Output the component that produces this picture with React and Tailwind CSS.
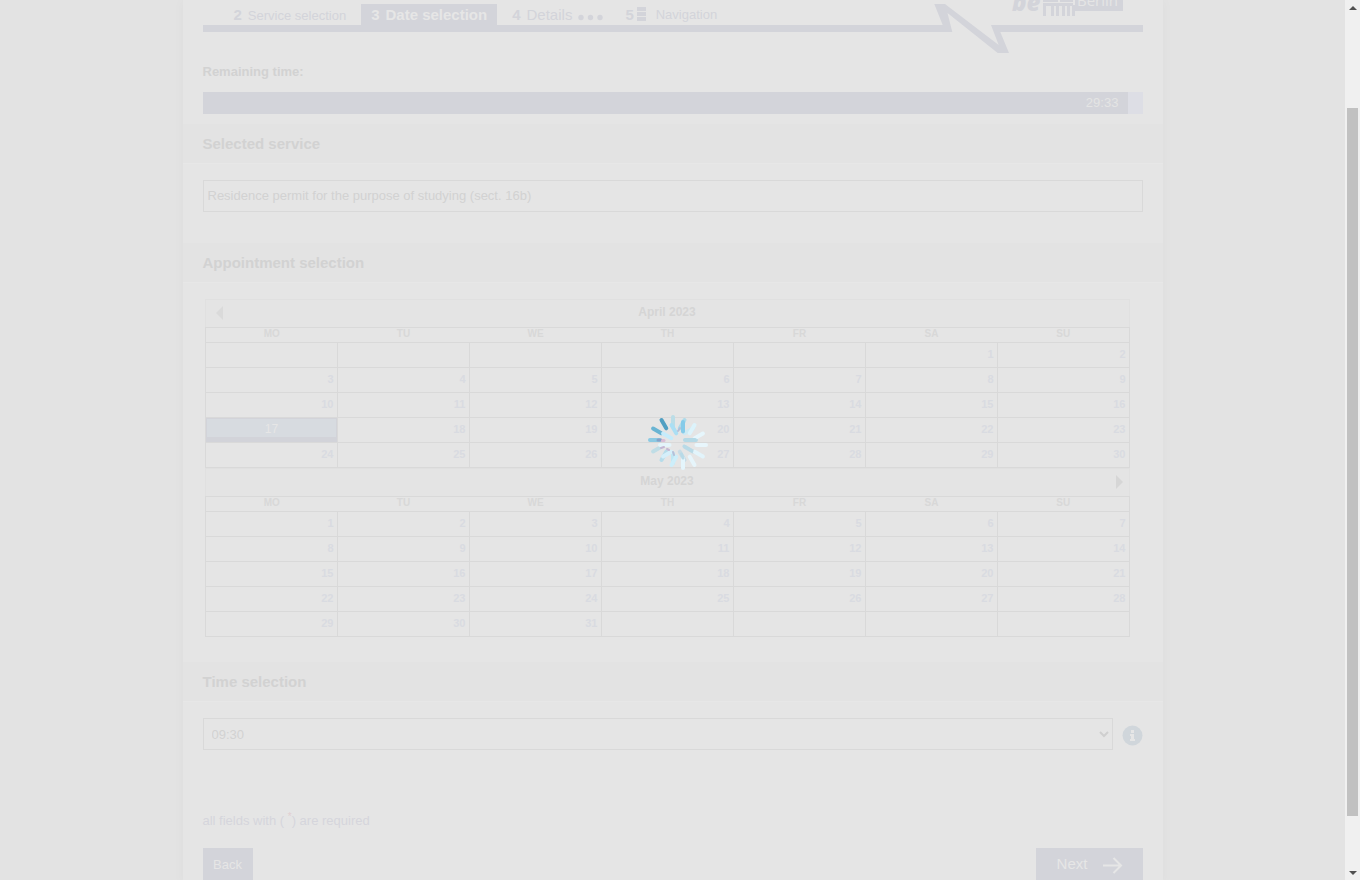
import React from "react";

const WEEKDAYS = ["MO", "TU", "WE", "TH", "FR", "SA", "SU"];

function buildWeeks(offset, count) {
  const cells = [];
  for (let i = 0; i < 35; i++) {
    const day = i - offset + 1;
    cells.push(day >= 1 && day <= count ? day : null);
  }
  return [0, 1, 2, 3, 4].map((w) => cells.slice(w * 7, w * 7 + 7));
}

function Logo() {
  return (
    <svg width="240" height="53" viewBox="0 0 240 53" className="block shrink-0 fill-[#d3d4da]" role="img" aria-label="Berlin">
      <path d="M0 25H39.700L31.300 4H42L95.700 45L88 25H240V32H97.300L106 53H94.700L44.500 13L49.300 32H0Z" />
      <text x="109" y="11" fontSize="24" fontWeight="800" fontStyle="italic" fontFamily="'Open Sans', sans-serif">be</text>
      <path d="M140 0H155V2H140ZM157 0H170V2H157Z" />
      <path d="M140 3H170V5H172V16H169V6H167V16H164V6H162V16H159V6H156V16H153V6H151V16H148V6H143V16H140Z" />
      <rect x="172" y="0" width="48" height="11" />
      <text x="174" y="6" fontSize="15" fontWeight="500" fontFamily="'Open Sans', sans-serif" className="fill-[#e5e5e5]">Berlin</text>
    </svg>
  );
}

function SectionTitle({ children }) {
  return (
    <h2 className="flex h-10 items-center border-b border-[#e7e7e7] bg-[#e3e3e3] px-5 pt-0.5 text-[15px] font-bold text-[#d2d2d2]">
      {children}
    </h2>
  );
}

function Month({ name, weeks, selected, prev, next }) {
  return (
    <section>
      <div className="flex h-7 items-center border-x border-t border-[#e0e0e0] bg-[#e4e4e4] pb-0.5 pl-2.5 pr-1.5">
        <div className="flex w-3 shrink-0">
          {prev && (
            <button type="button" aria-label="Previous month">
              <svg width="7" height="14" viewBox="0 0 7 14" className="fill-[#dadada]"><path d="M7 0V14L0 7Z" /></svg>
            </button>
          )}
        </div>
        <h3 className="flex-1 pb-px text-center text-xs font-bold leading-4 text-[#d5d5d5]">{name}</h3>
        <div className="flex w-4 shrink-0 justify-end">
          {next && (
            <button type="button" aria-label="Next month">
              <svg width="7" height="14" viewBox="0 0 7 14" className="fill-[#d6d6d6]"><path d="M0 0V14L7 7Z" /></svg>
            </button>
          )}
        </div>
      </div>
      <table className="w-full table-fixed border-collapse border border-[#d9d9d9]">
        <thead>
          <tr className="h-[15px]">
            {WEEKDAYS.map((d) => (
              <th key={d} className="h-[15px] p-0 pl-px align-top text-[10px] font-bold leading-3 text-[#d8d8d8]">{d}</th>
            ))}
          </tr>
        </thead>
        <tbody>
          {weeks.map((week, w) => (
            <tr key={w} className="h-[25px]">
              {week.map((day, i) =>
                day !== null && day === selected ? (
                  <td key={i} className="h-[25px] border border-[#d9d9d9] p-0 text-center text-xs text-[#e6e6e6]">
                    <a href="#day" className="block h-6 border border-b-[5px] border-[#d2d3d9] bg-[#d7dbe0] pl-px pt-px leading-[18px]">{day}</a>
                  </td>
                ) : (
                  <td key={i} className="h-[25px] border border-[#d9d9d9] p-0 pb-0.5 pr-[3px] text-right text-[11px] font-bold leading-4 text-[#d9dbe1]">{day}</td>
                )
              )}
            </tr>
          ))}
        </tbody>
      </table>
    </section>
  );
}

const RING_BACK = ["#b9dae4", "#bfdae4", "#c7dce6", "#bfe7f4", "#b6dcea", "#bfdde6", "#8ccae3", "#69b4d3", "#519fc2", "#bbdde7", "#aedbea", "#cdeaf4"];
const RING_FRONT = ["#e8f6fc", "#e2f4fb", "#e6f5fb", "#e4f5fc", "#cdeefa", "#d5effa", "#e4f4fa", "#c6ecfb", "#abdff4", "#86cbe9", "#dcf3fb", "#e6f6fc"];

function Ring({ cx, cy, colors }) {
  return (
    <g strokeWidth="4" strokeLinecap="round">
      {colors.map((color, i) => (
        <path key={i} d="M13.500 0H23" stroke={color} transform={`translate(${cx} ${cy}) rotate(${i * 30})`} />
      ))}
    </g>
  );
}

function Spinner() {
  return (
    <div role="status" aria-label="Loading" className="pointer-events-none absolute inset-0 flex items-center justify-center">
      <svg width="62" height="58" viewBox="0 0 62 58" className="mt-1.5 mr-1">
        <Ring cx={26} cy={26} colors={RING_BACK} />
        <Ring cx={36} cy={31} colors={RING_FRONT} />
        <g strokeWidth="3" strokeLinecap="round">
          <path d="M11 26H14" stroke="#86a2c9" />
          <path d="M15.500 26.500H17" stroke="#d9bdd6" />
          <path d="M14 34L17 33M20 35L22 36" stroke="#c4b7d3" strokeWidth="2" />
          <path d="M26 38L27 41M33 14L31 17" stroke="#b5bfd8" strokeWidth="2" />
          <path d="M38 26H48" stroke="#b4d9e6" strokeWidth="4" />
          <path d="M37 32L45 37" stroke="#b8dae7" />
          <path d="M34.500 40L36 44" stroke="#b8dae7" />
        </g>
      </svg>
    </div>
  );
}

export default function App() {
  return (
    <div className="relative flex h-screen overflow-hidden bg-[#e3e3e3] font-['Liberation_Sans',Arial,sans-serif] text-[13px] text-[#d2d2d2]">
      <div className="min-w-0 flex-1 overflow-hidden">
        <main className="mx-auto min-h-full max-w-[980px] bg-[#e5e5e5] shadow-[0_0_12px_rgba(0,0,0,0.03)]">
          <header className="flex items-start px-5 text-[#d3d4da]">
            <nav className="flex h-8 min-w-0 flex-1 whitespace-nowrap border-b-[7px] border-[#d3d4da] pl-[21px] pt-1 leading-[21px]">
              <a href="#service" className="flex gap-1.5 px-2.5 text-[13px]">
                <b className="text-[15px]">2</b>
                <span className="pt-px">Service selection</span>
              </a>
              <a href="#date" className="ml-[5px] flex gap-1.5 bg-[#d3d4da] px-2.5 text-[15px] font-bold text-[#e6e6e6]">
                <b>3</b>
                <span>Date selection</span>
              </a>
              <a href="#details" className="ml-[5px] flex gap-1.5 pl-2.5 text-[15px]">
                <b>4</b>
                <span>Details</span>
                <svg width="25" height="21" viewBox="0 0 25 21" className="fill-[#d3d4da]">
                  <circle cx="3" cy="13.500" r="2.700" /><circle cx="12.500" cy="13.500" r="2.700" /><circle cx="22" cy="13.500" r="2.700" />
                </svg>
              </a>
              <a href="#navigation" className="ml-3 flex px-2.5 text-[13px]">
                <b className="text-[15px]">5</b>
                <svg width="9" height="21" viewBox="0 0 9 21" className="ml-[3px] mr-2.5 fill-[#d3d4da]">
                  <path d="M0 3H9V7H0ZM0 8H9V12H0ZM0 13H9V17H0Z" />
                </svg>
                <span>Navigation</span>
              </a>
            </nav>
            <Logo />
          </header>

          <div className="px-5 pb-2.5 pt-2.5">
            <p className="font-bold leading-[18px]">Remaining time:</p>
            <div className="mt-[11px] bg-[#dddee5]">
              <div className="h-[22px] w-[98.5%] bg-[#d3d4da] pr-2.5 text-right leading-[22px] text-[#e4e4e4]">29:33</div>
            </div>
          </div>

          <SectionTitle>Selected service</SectionTitle>
          <div className="px-5 pb-[31px] pt-4">
            <input
              aria-label="Selected service"
              readOnly
              value="Residence permit for the purpose of studying (sect. 16b)"
              className="block h-8 w-full border border-[#d9d9d9] bg-transparent px-1 pb-0.5 text-[13px] text-[#d2d2d2] outline-none"
            />
          </div>

          <SectionTitle>Appointment selection</SectionTitle>
          <div className="pb-[25px] pl-[22px] pr-[33px] pt-4">
            <Month name="April 2023" weeks={buildWeeks(5, 30)} selected={17} prev />
            <Month name="May 2023" weeks={buildWeeks(0, 31)} next />
          </div>

          <SectionTitle>Time selection</SectionTitle>
          <div className="px-5 pt-4">
            <div className="flex items-center gap-[9px]">
              <div className="relative flex-1">
                <select aria-label="Time selection" className="block h-8 w-full appearance-none border border-[#d9d9d9] bg-transparent px-2 pt-0.5 text-[13px] text-[#d2d2d2]">
                  <option>09:30</option>
                </select>
                <svg width="10" height="7" viewBox="0 0 10 7" className="pointer-events-none absolute right-1 top-[13px] fill-none stroke-[#cfcfcf]" strokeWidth="2">
                  <path d="M1 1L5 5L9 1" />
                </svg>
              </div>
              <button type="button" aria-label="Information" className="pt-0.5">
                <svg width="21" height="21" viewBox="0 0 21 21">
                  <circle cx="10.500" cy="10.500" r="10" className="fill-[#d0d6db]" />
                  <path d="M9 5H12V8H9ZM8 9H12V14H13V16H8V14H9V11H8Z" className="fill-[#e6e6e6]" />
                </svg>
              </button>
            </div>
            <p className="mt-[62px] leading-[18px] text-[#d5d5dc]">
              all fields with ( <sup className="text-[10px] text-[#e2cfd1]">*</sup>) are required
            </p>
            <div className="mt-[18px] flex justify-between text-[#e6e6e6]">
              <button type="button" className="h-9 w-[50px] bg-[#d3d4da] pb-0.5 text-[13px] leading-8">Back</button>
              <button type="button" className="flex h-9 w-[107px] items-center justify-center gap-4 bg-[#d3d4da] pb-0.5 pl-0.5 text-[15px]">
                <span className="pb-0.5">Next</span>
                <svg width="20" height="17" viewBox="0 0 20 17" className="fill-none stroke-[#e6e6e6]" strokeWidth="2">
                  <path d="M0 8.500H18M10.500 1L18 8.500L10.500 16" />
                </svg>
              </button>
            </div>
          </div>
        </main>
      </div>

      <div aria-hidden="true" className="flex w-[15px] shrink-0 flex-col items-center bg-[#f0f0f0]">
        <div className="flex h-[15px] items-center">
          <svg width="8" height="4" viewBox="0 0 8 4" className="fill-[#505050]"><path d="M0 4L4 0L8 4Z" /></svg>
        </div>
        <div className="flex w-full flex-1 flex-col px-0.5 pb-[49px] pt-[93px]">
          <div className="w-[11px] flex-1 bg-[#c1c1c1]" />
        </div>
        <div className="flex h-[15px] items-center">
          <svg width="8" height="4" viewBox="0 0 8 4" className="fill-[#505050]"><path d="M0 0L4 4L8 0Z" /></svg>
        </div>
      </div>

      <Spinner />
    </div>
  );
}
